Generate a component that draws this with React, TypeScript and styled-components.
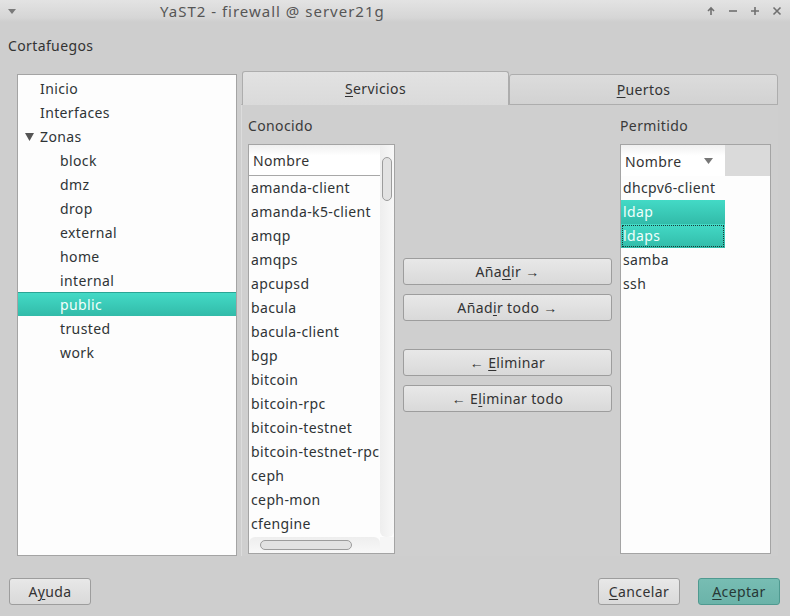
import React from "react";
import styled, { createGlobalStyle } from "styled-components";

const Global = createGlobalStyle`
  html, body { margin: 0; padding: 0; }
  body {
    background: #cecece;
    font-family: "Noto Sans", "Open Sans", sans-serif;
    font-size: 14px;
    letter-spacing: 0.38px;
    color: #2f3436;
  }
  * { box-sizing: border-box; }
`;

const Window = styled.div`
  width: 790px;
  height: 616px;
  display: flex;
  flex-direction: column;
  background: #cecece;
  overflow: hidden;
`;

const TitleBar = styled.div`
  height: 22px;
  flex-shrink: 0;
  display: flex;
  align-items: center;
  padding: 0 6px 0 8px;
  background: linear-gradient(#e3e3e3, #d6d6d6 80%, #cecece);
  color: #555;
`;

const MenuArrow = styled.div`
  width: 20px;
  display: flex;
  align-items: center;
`;

const Title = styled.div`
  flex: 1;
  font-size: 15px;
  letter-spacing: 1px;
  padding-left: 132px;
  color: #565656;
  line-height: 22px;
`;

const WinButtons = styled.div`
  display: flex;
  gap: 8px;
  align-items: center;
`;

const WinBtn = styled.div`
  width: 14px;
  height: 14px;
  display: flex;
  align-items: center;
  justify-content: center;
`;

const Heading = styled.div`
  height: 49px;
  flex-shrink: 0;
  padding: 14px 0 0 8px;
  line-height: 20px;
  color: #333;
`;

const Main = styled.div`
  height: 485px;
  flex-shrink: 0;
  display: flex;
  padding: 0 12px 0 17px;
  gap: 4px;
`;

const Tree = styled.div`
  width: 220px;
  margin-top: 3px;
  border: 1px solid #a4a4a4;
  background: #fdfdfd;
  padding-top: 1px;
`;

const TreeRow = styled.div<{ $level: number; $selected?: boolean }>`
  height: 24px;
  line-height: 22px;
  padding-top: ${(p) => (p.$selected ? 1 : 2)}px;
  display: flex;
  align-items: center;
  padding-left: ${(p) => (p.$level === 0 ? 22 : 42)}px;
  color: ${(p) => (p.$selected ? "#f2fffc" : "#2f3436")};
  background: ${(p) =>
    p.$selected ? "linear-gradient(#43dac6, #32bba9)" : "transparent"};
  border-top: ${(p) => (p.$selected ? "1px solid #2aa595" : "none")};
`;

const Expander = styled.span`
  width: 15px;
  margin-left: -15px;
  display: inline-flex;
  align-items: center;
`;

const TabArea = styled.div`
  width: 537px;
  display: flex;
  flex-direction: column;
  min-height: 0;
`;

const TabBar = styled.div`
  height: 34px;
  flex-shrink: 0;
  display: flex;
  align-items: flex-end;
  padding-left: 1px;
  border-bottom: 1px solid #b8b8b8;
`;

const Tab = styled.div<{ $active?: boolean; $w: number }>`
  width: ${(p) => p.$w}px;
  height: ${(p) => (p.$active ? 34 : 31)}px;
  margin-bottom: -1px;
  display: flex;
  align-items: center;
  justify-content: center;
  border: 1px solid #adadad;
  border-bottom: ${(p) => (p.$active ? "none" : "1px solid #adadad")};
  border-radius: 3px 3px 0 0;
  background: ${(p) =>
    p.$active ? "linear-gradient(#e2e2e2, #dadada)" : "linear-gradient(#dcdcdc, #d2d2d2)"};
  color: #333;
`;

const Panel = styled.div`
  flex: 1;
  min-height: 0;
  overflow: hidden;
  display: flex;
  gap: 8px;
  padding: 0 7px 2px 6px;
  border-left: 1px solid #dcdcdc;
  background: #cfcfcf;
`;

const Column = styled.div<{ $w: number }>`
  width: ${(p) => p.$w}px;
  min-height: 0;
  display: flex;
  flex-direction: column;
`;

const Label = styled.div`
  padding-top: 10px;
  height: 39px;
  flex-shrink: 0;
  line-height: 22px;
  color: #3a3a3a;
`;

const ListBox = styled.div`
  flex: 1;
  min-height: 0;
  border: 1px solid #a4a4a4;
  background: #fdfdfd;
  display: grid;
  grid-template-columns: minmax(0, 1fr) 14px;
  grid-template-rows: minmax(0, 1fr) 16px;
  overflow: hidden;
`;

const ListMain = styled.div`
  overflow: hidden;
  min-height: 0;
  display: flex;
  flex-direction: column;
`;

const HeaderRow = styled.div<{ $w?: number }>`
  height: 31px;
  flex-shrink: 0;
  display: flex;
  align-items: center;
  justify-content: space-between;
  padding: 1px 12px 0 4px;
  width: ${(p) => (p.$w ? `${p.$w}px` : "auto")};
  background: linear-gradient(#f0f0f0, #ffffff 35%);
  border-bottom: ${(p) => (p.$w ? "none" : "1px solid #a8a8a8")};
  color: #333;
`;

const HeaderWrap = styled.div`
  display: flex;
  background: #dadada;
  flex-shrink: 0;
`;

const Item = styled.div<{ $selected?: boolean; $focus?: boolean; $w?: number }>`
  height: 24px;
  line-height: 24px;
  flex-shrink: 0;
  padding-left: 2px;
  white-space: nowrap;
  width: ${(p) => (p.$w ? `${p.$w}px` : "auto")};
  color: ${(p) => (p.$selected ? "#effffc" : "#2f3436")};
  background: ${(p) =>
    p.$selected ? "linear-gradient(#43dac6, #32bba9)" : "transparent"};
  outline: ${(p) => (p.$focus ? "1px dotted #1d3a36" : "none")};
  outline-offset: -2px;
`;

const VScroll = styled.div`
  background: linear-gradient(90deg, #eeeeee, #f8f8f8);
  border-radius: 0 0 6px 6px;
  padding: 12px 2px 0 2px;
`;

const VThumb = styled.div`
  height: 44px;
  border: 1px solid #9c9c9c;
  border-radius: 5px;
  background: #e2e2e2;
`;

const HScroll = styled.div`
  background: linear-gradient(#eeeeee, #f8f8f8);
  border-radius: 6px 6px 0 0;
  padding: 3px 0 0 11px;
`;

const HThumb = styled.div`
  width: 92px;
  height: 10px;
  border: 1px solid #9c9c9c;
  border-radius: 5px;
  background: #e2e2e2;
`;

const Corner = styled.div`
  background: #f6f6f6;
`;

const Middle = styled.div`
  width: 209px;
  display: flex;
  flex-direction: column;
  padding-top: 153px;
`;

const BtnGroup = styled.div`
  display: flex;
  flex-direction: column;
  gap: 9px;
  margin-bottom: 28px;
`;

const Button = styled.div<{ $w?: number; $primary?: boolean }>`
  height: 27px;
  width: ${(p) => (p.$w ? `${p.$w}px` : "100%")};
  display: flex;
  align-items: center;
  justify-content: center;
  border: 1px solid ${(p) => (p.$primary ? "#4f9a90" : "#9d9d9d")};
  border-radius: 3px;
  background: ${(p) =>
    p.$primary ? "linear-gradient(#77bdb3, #6bb3a9)" : "linear-gradient(#e8e8e8, #d9d9d9)"};
  color: ${(p) => (p.$primary ? "#273836" : "#333")};
  cursor: default;
`;

const PermBody = styled.div`
  flex: 1;
  min-height: 0;
  border: 1px solid #a4a4a4;
  background: #fdfdfd;
  display: flex;
  flex-direction: column;
`;

const Bottom = styled.div`
  flex: 1;
  display: flex;
  align-items: flex-start;
  padding: 22px 10px 0 9px;
`;

const Spacer = styled.div`
  flex: 1;
`;

const BottomRight = styled.div`
  display: flex;
  gap: 18px;
`;

const U = styled.span`
  text-decoration: underline;
  text-underline-offset: 2px;
`;

const known = [
  "amanda-client",
  "amanda-k5-client",
  "amqp",
  "amqps",
  "apcupsd",
  "bacula",
  "bacula-client",
  "bgp",
  "bitcoin",
  "bitcoin-rpc",
  "bitcoin-testnet",
  "bitcoin-testnet-rpc",
  "ceph",
  "ceph-mon",
  "cfengine",
];

const zones = ["block", "dmz", "drop", "external", "home", "internal", "public", "trusted", "work"];

const Tri = () => (
  <svg width="9" height="8" viewBox="0 0 9 8">
    <path d="M0 0 L9 0 L4.5 8 Z" fill="#555" />
  </svg>
);

export default function App() {
  return (
    <Window>
      <Global />
      <TitleBar>
        <MenuArrow>
          <svg width="8" height="5" viewBox="0 0 8 5">
            <path d="M0 0 L8 0 L4 5 Z" fill="#7a7a7a" />
          </svg>
        </MenuArrow>
        <Title>YaST2 - firewall @ server21g</Title>
        <WinButtons>
          <WinBtn>
            <svg width="10" height="10" viewBox="0 0 10 10">
              <path d="M5 9 V2 M2 5 L5 2 L8 5" stroke="#707070" strokeWidth="1.6" fill="none" />
            </svg>
          </WinBtn>
          <WinBtn>
            <svg width="10" height="10" viewBox="0 0 10 10">
              <path d="M1 5 H9" stroke="#707070" strokeWidth="1.6" />
            </svg>
          </WinBtn>
          <WinBtn>
            <svg width="10" height="10" viewBox="0 0 10 10">
              <path d="M1 5 H9 M5 1 V9" stroke="#707070" strokeWidth="1.6" />
            </svg>
          </WinBtn>
          <WinBtn>
            <svg width="10" height="10" viewBox="0 0 10 10">
              <path d="M1.5 1.5 L8.5 8.5 M8.5 1.5 L1.5 8.5" stroke="#707070" strokeWidth="1.6" />
            </svg>
          </WinBtn>
        </WinButtons>
      </TitleBar>
      <Heading>Cortafuegos</Heading>
      <Main>
        <Tree>
          <TreeRow $level={0}>Inicio</TreeRow>
          <TreeRow $level={0}>Interfaces</TreeRow>
          <TreeRow $level={0}>
            <Expander>
              <Tri />
            </Expander>
            Zonas
          </TreeRow>
          {zones.map((z) => (
            <TreeRow key={z} $level={1} $selected={z === "public"}>
              {z}
            </TreeRow>
          ))}
        </Tree>
        <TabArea>
          <TabBar>
            <Tab $active $w={267}>
              <span>
                <U>S</U>ervicios
              </span>
            </Tab>
            <Tab $w={269}>
              <span>
                <U>P</U>uertos
              </span>
            </Tab>
          </TabBar>
          <Panel>
            <Column $w={147}>
              <Label>Conocido</Label>
              <ListBox>
                <ListMain>
                  <HeaderRow>Nombre</HeaderRow>
                  {known.map((k) => (
                    <Item key={k}>{k}</Item>
                  ))}
                </ListMain>
                <VScroll>
                  <VThumb />
                </VScroll>
                <HScroll>
                  <HThumb />
                </HScroll>
                <Corner />
              </ListBox>
            </Column>
            <Middle>
              <BtnGroup>
                <Button>
                  <span>
                    Aña<U>d</U>ir →
                  </span>
                </Button>
                <Button>
                  <span>
                    Añad<U>i</U>r todo →
                  </span>
                </Button>
              </BtnGroup>
              <BtnGroup>
                <Button>
                  <span>
                    ← <U>E</U>liminar
                  </span>
                </Button>
                <Button>
                  <span>
                    ← E<U>l</U>iminar todo
                  </span>
                </Button>
              </BtnGroup>
            </Middle>
            <Column $w={151}>
              <Label>Permitido</Label>
              <PermBody>
                <HeaderWrap>
                  <HeaderRow $w={104}>
                    Nombre
                    <svg width="9" height="6" viewBox="0 0 9 6">
                      <path d="M0 0 L9 0 L4.5 6 Z" fill="#777" />
                    </svg>
                  </HeaderRow>
                </HeaderWrap>
                <Item $w={104}>dhcpv6-client</Item>
                <Item $w={104} $selected>
                  ldap
                </Item>
                <Item $w={104} $selected $focus>
                  ldaps
                </Item>
                <Item $w={104}>samba</Item>
                <Item $w={104}>ssh</Item>
              </PermBody>
            </Column>
          </Panel>
        </TabArea>
      </Main>
      <Bottom>
        <Button $w={82}>
          <span>
            A<U>y</U>uda
          </span>
        </Button>
        <Spacer />
        <BottomRight>
          <Button $w={82}>
            <span>
              <U>C</U>ancelar
            </span>
          </Button>
          <Button $w={82} $primary>
            <span>
              <U>A</U>ceptar
            </span>
          </Button>
        </BottomRight>
      </Bottom>
    </Window>
  );
}
